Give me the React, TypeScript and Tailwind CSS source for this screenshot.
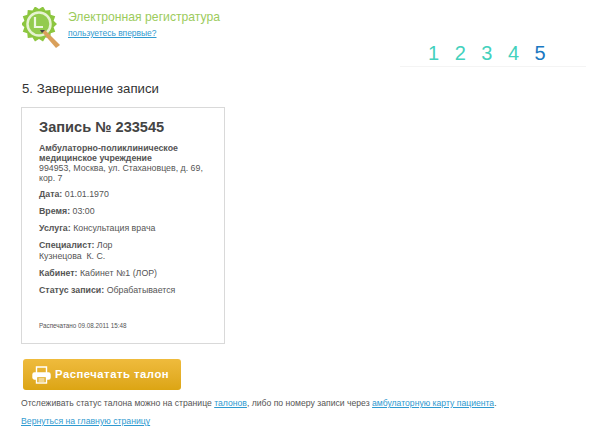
function Logo() {
  const teeth = Array.from({ length: 14 }, (_, i) => {
    const a = (i / 14) * Math.PI * 2;
    const b = ((i + 0.5) / 14) * Math.PI * 2;
    return `${17 + 18 * Math.cos(a)},${17 + 18 * Math.sin(a)} ${17 + 15 * Math.cos(b)},${17 + 15 * Math.sin(b)}`;
  }).join(" ");
  return (
    <svg width="40" height="42" viewBox="0 0 40 42" className="shrink-0">
      <polygon points={teeth} fill="#8cc63f" />
      <circle cx="17" cy="17" r="11.5" fill="#93cb4e" stroke="#e6f3d2" strokeWidth="2.5" />
      <path d="M13 10v10h8" fill="none" stroke="#eef7e0" strokeWidth="2.2" />
      <path d="M20 25l3-2 15 15-4 3z" fill="#d9a05b" />
      <path d="M18 23l5 0-3 3z" fill="#444" />
    </svg>
  );
}

function Row({ label, children }: { label: string; children: React.ReactNode }) {
  return (
    <p className="mb-[6px] leading-[11px]">
      <b>{label}</b> {children}
    </p>
  );
}

export default function App() {
  return (
    <div className="w-[600px] h-[438px] overflow-hidden bg-white font-['Liberation_Sans',Arial,sans-serif] text-[#444]">
      <header className="relative h-[67px] pl-[22px] pt-[7px] flex gap-[6px]">
        <Logo />
        <div className="pt-[3px]">
          <div className="text-[12.2px] leading-[15px] text-[#9ccb5c]">Электронная регистратура</div>
          <a className="block mt-[3px] text-[8.45px] leading-[11px] text-[#2f9ad0] underline">пользуетесь впервые?</a>
        </div>
        <div className="absolute left-[400px] right-[14px] bottom-0 h-px bg-[#f4f4f4]" />
        <ol className="absolute left-[428px] top-[42px] flex gap-[15.5px] text-[20px] leading-[23px] text-[#43d1bd]">
          <li>1</li>
          <li>2</li>
          <li>3</li>
          <li>4</li>
          <li className="text-[#1a78c2]">5</li>
        </ol>
      </header>

      <main className="pl-[22px]">
        <h2 className="mt-[14px] text-[13.2px] leading-[16px] text-[#333]">5. Завершение записи</h2>

        <section className="mt-[10px] -ml-px w-[204px] h-[237px] border border-[#d9d9d9] pl-[17px] pr-[15px] pt-[10px] text-[8.8px] text-[#555]">
          <h3 className="text-[14.6px] leading-[18px] font-bold text-[#444] mb-[7px]">Запись № 233545</h3>
          <p className="mb-[6px] leading-[10px]">
            <b>
              Амбулаторно-поликлиническое
              <br />
              медицинское учреждение
            </b>
            <br />
            994953, Москва, ул. Стахановцев, д. 69, кор. 7
          </p>
          <Row label="Дата:">01.01.1970</Row>
          <Row label="Время:">03:00</Row>
          <Row label="Услуга:">Консультация врача</Row>
          <Row label="Специалист:">
            Лор
            <br />
            Кузнецова&nbsp; К. С.
          </Row>
          <Row label="Кабинет:">Кабинет №1 (ЛОР)</Row>
          <Row label="Статус записи:">Обрабатывается</Row>
          <p className="mt-[26px] text-[6.3px] leading-[8px]">Распечатано 09.08.2011 15:48</p>
        </section>

        <button className="mt-[15px] ml-px w-[158px] h-[31px] rounded-[3px] bg-gradient-to-b from-[#efbb3c] to-[#dca512] flex items-center gap-[4px] pl-[9px] text-white">
          <svg width="19" height="18" viewBox="0 0 19 18" fill="none" stroke="#fff" strokeWidth="1.4">
            <path d="M4.5 7V1h10v6" />
            <path d="M4 13H2.5A1.5 1.5 0 0 1 1 11.5V8.5A1.5 1.5 0 0 1 2.5 7h14A1.5 1.5 0 0 1 18 8.5v3a1.5 1.5 0 0 1-1.5 1.5H15" fill="#fff" />
            <rect x="4.5" y="10.5" width="10" height="6.5" fill="#e2ad24" />
            <path d="M6.5 13h6M6.5 15h6" strokeWidth="1" />
          </svg>
          <span className="text-[11.3px] font-bold tracking-[0.5px]">Распечатать талон</span>
        </button>

        <p className="mt-[8px] -ml-px text-[8.65px] leading-[11px] text-[#555]">
          Отслеживать статус талона можно на странице <a className="text-[#2f9ad0] underline">талонов</a>, либо по номеру записи через{" "}
          <a className="text-[#2f9ad0] underline">амбулаторную карту пациента</a>.
        </p>
        <a className="block mt-[7px] -ml-px text-[8.7px] leading-[11px] text-[#2f9ad0] underline">Вернуться на главную страницу</a>
      </main>
    </div>
  );
}
